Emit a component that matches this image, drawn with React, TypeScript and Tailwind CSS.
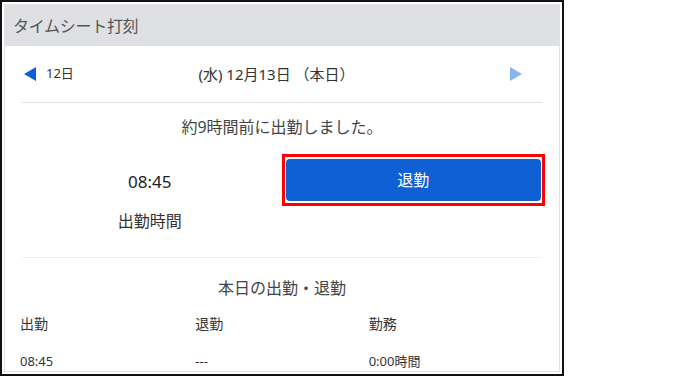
import React from "react";

const font = { fontFamily: '"Noto Sans", "Noto Sans CJK JP", sans-serif' };

export default function App() {
  return (
    <div className="w-[684px] h-[378px] bg-white text-[#333]" style={font}>
      <div className="w-[564px] h-[376px] border-2 border-[#111] p-[2px]">
        <div className="h-full border border-[#e2e2e2] flex flex-col">
          <div className="h-[41px] bg-[#dfe0e3] px-[8px] flex items-center text-[16px] text-[#555] tracking-[-0.3px]">
            タイムシート打刻
          </div>
          <div className="px-[17px] flex flex-col">
            <div className="h-[57px] flex items-center border-b border-[#e3e3e3]">
              <div className="w-[60px] flex items-center">
                <svg width="13" height="14" viewBox="0 0 13 14" className="ml-[2px]">
                  <polygon points="12,0 12,14 0,7" fill="#0f5fd5" />
                </svg>
                <span className="ml-[9px] text-[13px] text-[#333]">12日</span>
              </div>
              <div className="flex-1 text-center text-[15px] text-[#333]">(水) 12月13日 （本日）</div>
              <div className="w-[71px] flex justify-end pr-[20px]">
                <svg width="12" height="14" viewBox="0 0 12 14">
                  <polygon points="0,0 0,14 12,7" fill="#8ab4ee" />
                </svg>
              </div>
            </div>
            <div className="pt-[14px] leading-[20px] text-center text-[16px] text-[#444]">
              約9時間前に出勤しました。
            </div>
            <div className="mt-[17px] h-[104px] flex border-b border-[#f0f0f0]">
              <div className="w-[256px] flex flex-col items-center">
                <div className="pt-[16px] leading-[24px] text-[17px] text-[#222]">08:45</div>
                <div className="mt-[17px] leading-[20px] text-[16px] text-[#333]">出勤時間</div>
              </div>
              <div className="ml-[4px] -mr-[3px] w-[264px] h-[52px] border-[3px] border-[#ff0000] px-[1px] py-[2px] bg-white">
                <div className="h-full rounded-[4px] bg-[#0f5fd5] flex items-center justify-center text-white text-[16px]">
                  退勤
                </div>
              </div>
            </div>
            <div className="pt-[20px] leading-[20px] text-center text-[16px] text-[#444]">本日の出勤・退勤</div>
            <div className="mt-[16px] grid grid-cols-3 leading-[20px] text-[14px] text-[#333]">
              <div className="-ml-[2px]">出勤</div>
              <div>退勤</div>
              <div>勤務</div>
            </div>
            <div className="mt-[17px] grid grid-cols-3 leading-[20px] text-[13px] text-[#333]">
              <div className="-ml-[2px]">08:45</div>
              <div>---</div>
              <div>0:00時間</div>
            </div>
          </div>
        </div>
      </div>
    </div>
  );
}
